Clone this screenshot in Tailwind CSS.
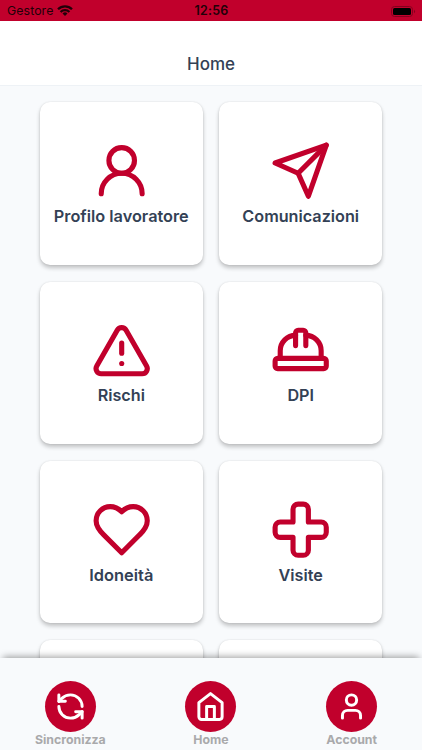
<!DOCTYPE html>
<html lang="it">
<head>
  <meta charset="UTF-8">
  <meta name="viewport" content="width=device-width, initial-scale=1.0">
  <title>Home</title>
  <script src="https://cdn.jsdelivr.net/npm/@tailwindcss/browser@4"></script>
</head>
<body class="h-[750px] overflow-hidden bg-[#f8fafc] font-['Inter',sans-serif] text-[#334155]">
  <div class="flex h-full flex-col">

    <!-- Status bar -->
    <div class="grid h-[21px] shrink-0 grid-cols-3 items-center bg-[#c1002c] pl-[7px] pr-[6px] pt-px text-[#210008]">
      <div class="flex items-center gap-[4px]">
        <span class="text-[12.3px] leading-none tracking-[0.1px]">Gestore</span>
        <svg class="h-[11px] w-[16px]" viewBox="0 0 16 11" fill="none" stroke="currentColor" stroke-width="2.3">
          <path d="M1 4.3a10 10 0 0 1 14 0"/>
          <path d="M3.6 7a6.3 6.3 0 0 1 8.8 0"/>
          <path d="M8 11 5.5 8.6a3.5 3.5 0 0 1 5 0z" fill="currentColor" stroke="none"/>
        </svg>
      </div>
      <span class="text-center text-[12.5px] font-semibold leading-none tracking-[0.2px]">12:56</span>
      <svg class="h-[11px] w-[25px] justify-self-end" viewBox="0 0 25 11">
        <rect x=".5" y=".5" width="21" height="10" rx="3" fill="none" stroke="#85001e"/>
        <rect x="2" y="2" width="18" height="7" rx="1.5" fill="#000"/>
        <path d="M23 3.8v3.4a1.9 1.9 0 0 0 0-3.4z" fill="#85001e"/>
      </svg>
    </div>

    <!-- Header -->
    <header class="flex h-[65px] shrink-0 items-end justify-center border-b border-[#eef2f6] bg-white pb-[8px]">
      <h1 class="text-[17px] font-medium leading-[25px]">Home</h1>
    </header>

    <!-- Cards -->
    <main class="min-h-0 flex-1 overflow-hidden px-[40px] pt-[16.4px]">
      <div class="grid grid-cols-2 gap-[16.8px]">
        <div class="flex h-[162.5px] flex-col items-center rounded-[10px] bg-white pt-[38px] shadow-[0_3px_4px_rgba(0,0,0,0.22),0_0_2px_rgba(0,0,0,0.12)]">
          <svg class="size-[61.4px] shrink-0 text-[#c1002c]" viewBox="0 0 24 24" fill="none" stroke="currentColor" stroke-width="2" stroke-linecap="round" stroke-linejoin="round">
            <circle cx="12" cy="8" r="5"/>
            <path d="M20 21a8 8 0 1 0-16 0"/>
          </svg>
          <span class="mt-[2.6px] text-[16.3px] font-semibold leading-6">Profilo lavoratore</span>
        </div>
        <div class="flex h-[162.5px] flex-col items-center rounded-[10px] bg-white pt-[38px] shadow-[0_3px_4px_rgba(0,0,0,0.22),0_0_2px_rgba(0,0,0,0.12)]">
          <svg class="size-[61.4px] shrink-0 text-[#c1002c]" viewBox="0 0 24 24" fill="none" stroke="currentColor" stroke-width="2" stroke-linecap="round" stroke-linejoin="round">
            <path d="m22 2-7 20-4-9-9-4Z"/>
            <path d="M22 2 11 13"/>
          </svg>
          <span class="mt-[2.6px] text-[16.2px] font-semibold leading-6">Comunicazioni</span>
        </div>
        <div class="flex h-[162.5px] flex-col items-center rounded-[10px] bg-white pt-[38px] shadow-[0_3px_4px_rgba(0,0,0,0.22),0_0_2px_rgba(0,0,0,0.12)]">
          <svg class="size-[61.4px] shrink-0 text-[#c1002c]" viewBox="0 0 24 24" fill="none" stroke="currentColor" stroke-width="2" stroke-linecap="round" stroke-linejoin="round">
            <path d="m21.73 18-8-14a2 2 0 0 0-3.48 0l-8 14A2 2 0 0 0 4 21h16a2 2 0 0 0 1.73-3Z"/>
            <path d="M12 9v4"/>
            <path d="M12 17h.01"/>
          </svg>
          <span class="mt-[2px] text-[16.2px] font-semibold leading-6">Rischi</span>
        </div>
        <div class="flex h-[162.5px] flex-col items-center rounded-[10px] bg-white pt-[38px] shadow-[0_3px_4px_rgba(0,0,0,0.22),0_0_2px_rgba(0,0,0,0.12)]">
          <svg class="size-[61.4px] shrink-0 text-[#c1002c]" viewBox="0 0 24 24" fill="none" stroke="currentColor" stroke-width="2" stroke-linecap="round" stroke-linejoin="round">
            <path d="M2 18a1 1 0 0 0 1 1h18a1 1 0 0 0 1-1v-2a1 1 0 0 0-1-1H3a1 1 0 0 0-1 1v2z"/>
            <path d="M10 10V5a1 1 0 0 1 1-1h2a1 1 0 0 1 1 1v5"/>
            <path d="M4 15v-3a6 6 0 0 1 6-6"/>
            <path d="M14 6a6 6 0 0 1 6 6v3"/>
          </svg>
          <span class="mt-[2px] text-[16.2px] font-semibold leading-6">DPI</span>
        </div>
        <div class="flex h-[162.5px] flex-col items-center rounded-[10px] bg-white pt-[38px] shadow-[0_3px_4px_rgba(0,0,0,0.22),0_0_2px_rgba(0,0,0,0.12)]">
          <svg class="size-[61.4px] shrink-0 text-[#c1002c]" viewBox="0 0 24 24" fill="none" stroke="currentColor" stroke-width="2" stroke-linecap="round" stroke-linejoin="round">
            <path d="M19 14c1.49-1.46 3-3.21 3-5.5A5.5 5.5 0 0 0 16.5 3c-1.76 0-3 .5-4.5 2-1.5-1.5-2.74-2-4.5-2A5.5 5.5 0 0 0 2 8.5c0 2.3 1.5 4.05 3 5.5l7 7Z"/>
          </svg>
          <span class="mt-[2.3px] text-[16.4px] font-semibold leading-6">Idoneità</span>
        </div>
        <div class="flex h-[162.5px] flex-col items-center rounded-[10px] bg-white pt-[38px] shadow-[0_3px_4px_rgba(0,0,0,0.22),0_0_2px_rgba(0,0,0,0.12)]">
          <svg class="size-[61.4px] shrink-0 text-[#c1002c]" viewBox="0 0 24 24" fill="none" stroke="currentColor" stroke-width="2" stroke-linecap="round" stroke-linejoin="round">
            <path d="M11 2a2 2 0 0 0-2 2v5H4a2 2 0 0 0-2 2v2c0 1.1.9 2 2 2h5v5c0 1.1.9 2 2 2h2a2 2 0 0 0 2-2v-5h5a2 2 0 0 0 2-2v-2a2 2 0 0 0-2-2h-5V4a2 2 0 0 0-2-2h-2z"/>
          </svg>
          <span class="mt-[2.3px] text-[16.2px] font-semibold leading-6">Visite</span>
        </div>
        <div class="h-[162.5px] rounded-[10px] bg-white shadow-[0_3px_4px_rgba(0,0,0,0.22),0_0_2px_rgba(0,0,0,0.12)]"></div>
        <div class="h-[162.5px] rounded-[10px] bg-white shadow-[0_3px_4px_rgba(0,0,0,0.22),0_0_2px_rgba(0,0,0,0.12)]"></div>
      </div>
    </main>

    <!-- Bottom navigation -->
    <nav class="relative grid h-[92px] shrink-0 grid-cols-3 bg-[#f8fafc] pt-[23px] text-[12.3px] font-bold leading-4 text-[#a9a9ab] shadow-[0_-4px_7px_-3px_rgba(0,0,0,0.4)]">
      <div class="flex flex-col items-center">
        <div class="flex size-[51px] shrink-0 items-center justify-center rounded-full bg-[#c1002c]">
          <svg class="size-[31px] text-white" viewBox="0 0 24 24" fill="none" stroke="currentColor" stroke-width="2.3" stroke-linecap="round" stroke-linejoin="round">
            <path d="M21 12a9 9 0 0 0-9-9 9.75 9.75 0 0 0-6.74 2.74L3 8"/>
            <path d="M3 3v5h5"/>
            <path d="M3 12a9 9 0 0 0 9 9 9.75 9.75 0 0 0 6.74-2.74L21 16"/>
            <path d="M16 16h5v5"/>
          </svg>
        </div>
        <span>Sincronizza</span>
      </div>
      <div class="flex flex-col items-center">
        <div class="flex size-[51px] shrink-0 items-center justify-center rounded-full bg-[#c1002c]">
          <svg class="size-[31px] text-white" viewBox="0 0 24 24" fill="none" stroke="currentColor" stroke-width="2.3" stroke-linecap="round" stroke-linejoin="round">
            <path d="m3 9 9-7 9 7v11a2 2 0 0 1-2 2H5a2 2 0 0 1-2-2z"/>
            <path d="M9 22V12h6v10"/>
          </svg>
        </div>
        <span>Home</span>
      </div>
      <div class="flex flex-col items-center">
        <div class="flex size-[51px] shrink-0 items-center justify-center rounded-full bg-[#c1002c]">
          <svg class="size-[31px] text-white" viewBox="0 0 24 24" fill="none" stroke="currentColor" stroke-width="2.3" stroke-linecap="round" stroke-linejoin="round">
            <path d="M19 21v-2a4 4 0 0 0-4-4H9a4 4 0 0 0-4 4v2"/>
            <circle cx="12" cy="7" r="4"/>
          </svg>
        </div>
        <span>Account</span>
      </div>
    </nav>
  </div>
</body>
</html>
